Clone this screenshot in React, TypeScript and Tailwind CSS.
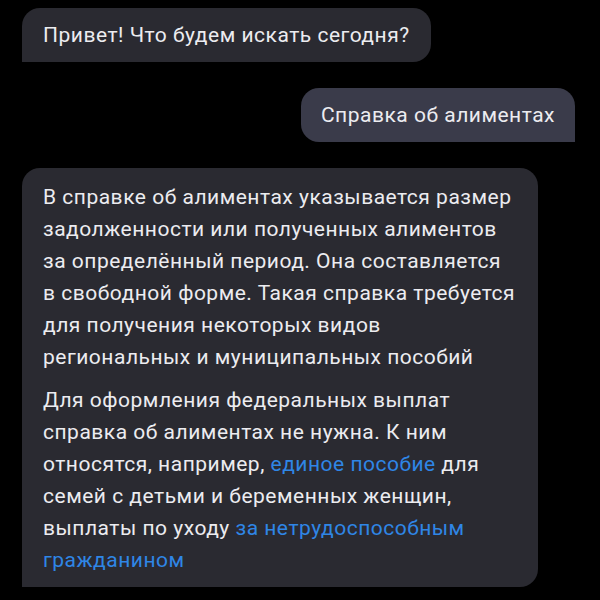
import React from 'react';

// Переписка с ассистентом
const Bubble = ({ side, children }: { side: 'in' | 'out'; children: React.ReactNode }) => {
  if (side === 'out') {
    return (
      <div className="flex justify-end">
        <div className="bg-[#3a3b4a] text-[#ececf0] rounded-[18px] rounded-br-none px-[20px] py-[11px]">
          {children}
        </div>
      </div>
    );
  }
  return (
    <div className="flex justify-start">
      <div className="bg-[#2a2a31] text-[#ececf0] rounded-[18px] rounded-bl-none px-[21px] py-[11px]">
        {children}
      </div>
    </div>
  );
};

const Link = ({ children }: { children: React.ReactNode }) => (
  <span className="text-[#2f86e6]">{children}</span>
);

export default function App() {
  return (
    <div
      className="w-[600px] h-[600px] bg-black overflow-hidden text-[21px] leading-8 tracking-[0.5px] whitespace-nowrap"
      style={{ fontFamily: 'Roboto, "Noto Sans", sans-serif' }}
    >
      <div className="flex flex-col gap-[26px] pl-[22px] pr-[25px] pt-[8px]">
        <Bubble side="in">Привет! Что будем искать сегодня?</Bubble>
        <Bubble side="out">Справка об алиментах</Bubble>
        <Bubble side="in">
          <div className="w-[474px] pt-[2px]">
            <p>
              В справке об алиментах указывается размер<br />
              задолженности или полученных алиментов<br />
              за определённый период. Она составляется<br />
              в свободной форме. Такая справка требуется<br />
              для получения некоторых видов<br />
              региональных и муниципальных пособий
            </p>
            <p className="mt-[11px]">
              Для оформления федеральных выплат<br />
              справка об алиментах не нужна. К ним<br />
              относятся, например, <Link>единое пособие</Link> для<br />
              семей с детьми и беременных женщин,<br />
              выплаты по уходу <Link>за нетрудоспособным</Link><br />
              <Link>гражданином</Link>
            </p>
          </div>
        </Bubble>
      </div>
    </div>
  );
}
